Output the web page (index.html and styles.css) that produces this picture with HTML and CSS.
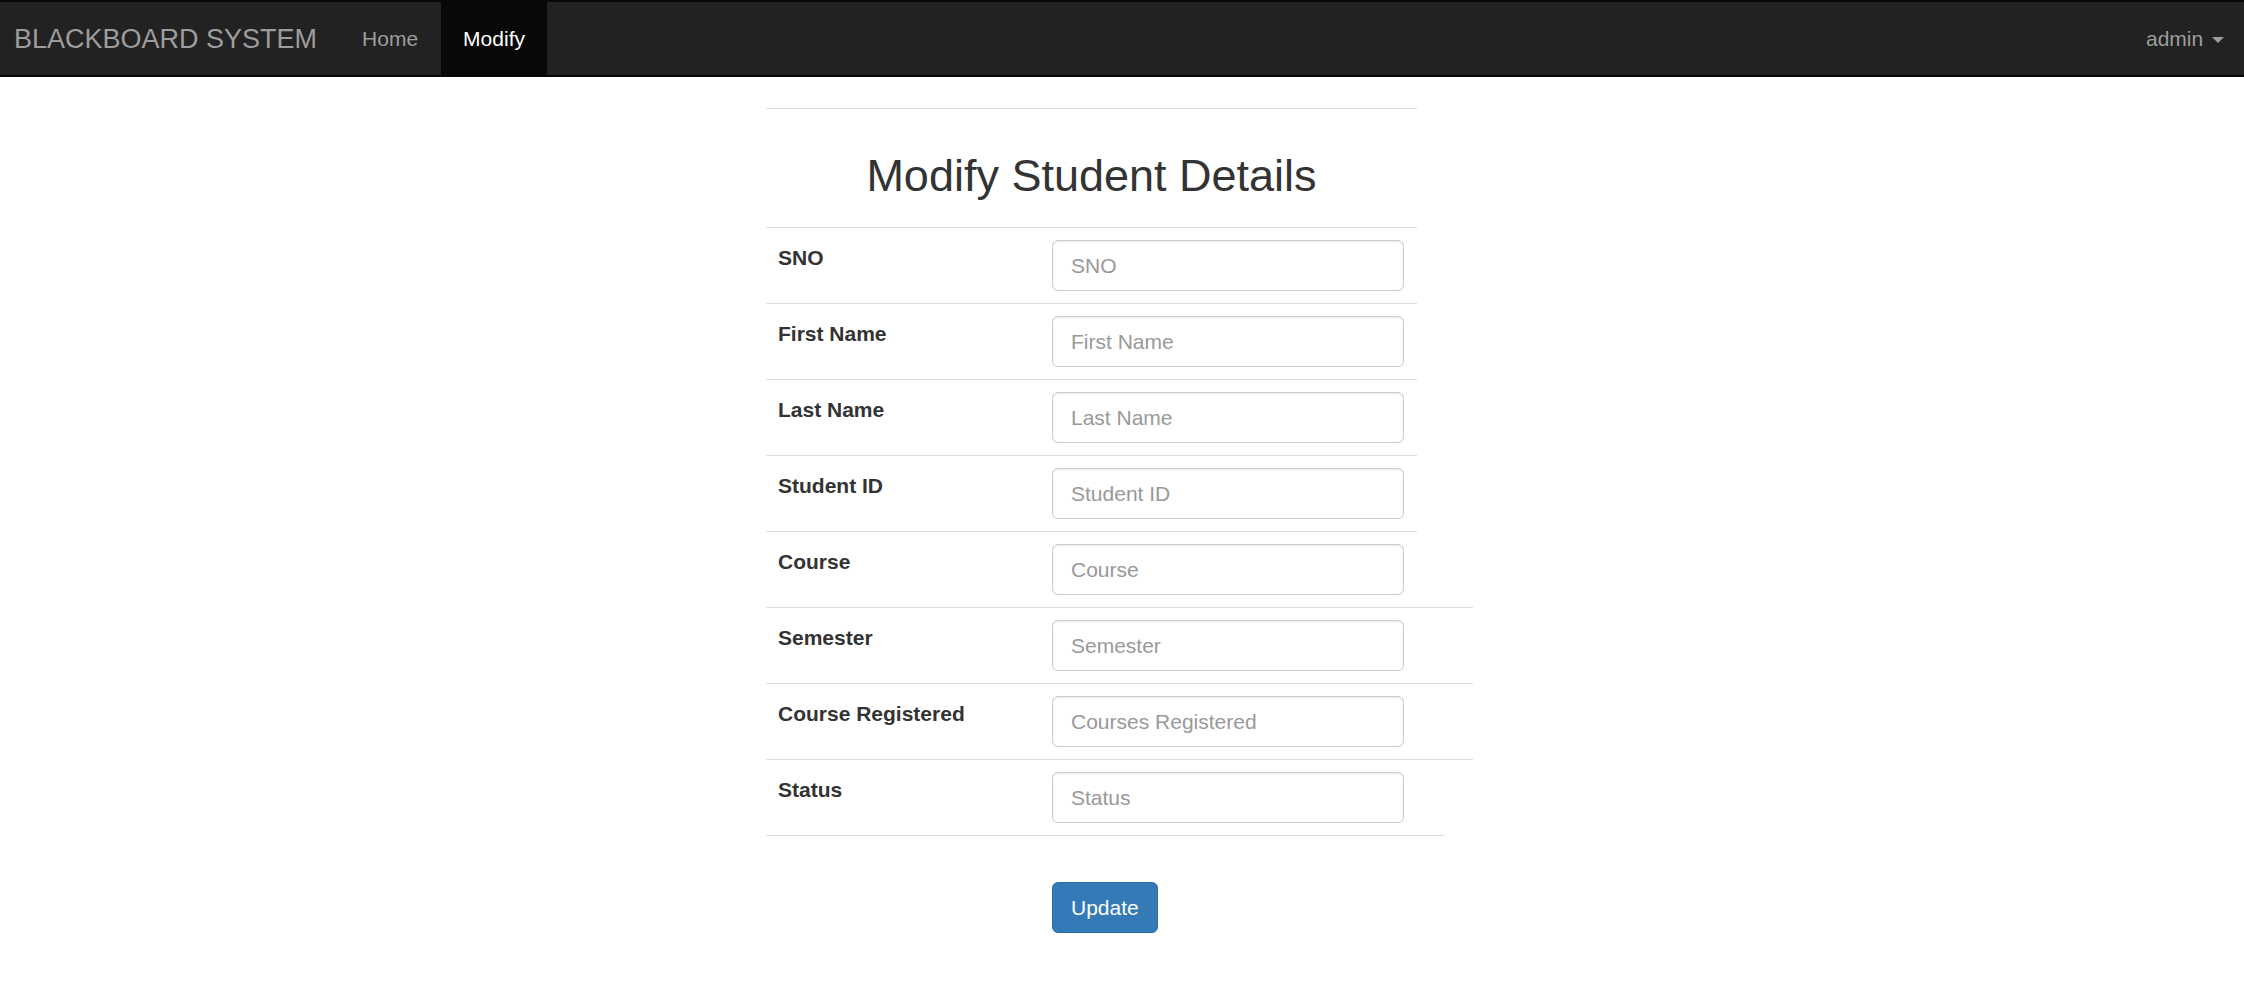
FILE: index.html
```html
<!DOCTYPE html>
<html lang="en">
<head>
<meta charset="utf-8">
<title>Modify Student Details</title>
<link rel="stylesheet" href="styles.css">
</head>
<body>
<nav class="navbar">
  <a class="brand" href="#">BLACKBOARD SYSTEM</a>
  <ul class="nav">
    <li><a class="nav-link" href="#">Home</a></li>
    <li><a class="nav-link active" href="#">Modify</a></li>
  </ul>
  <div class="nav-spacer"></div>
  <a class="nav-link user" href="#">admin <span class="caret"></span></a>
</nav>

<main class="page">
  <form class="student-form">
    <div class="title-row">
      <h2 class="title">Modify Student Details</h2>
    </div>
    <div class="field-row">
      <label class="field-label" for="sno">SNO</label>
      <div class="field-control"><input class="input" id="sno" type="text" placeholder="SNO"></div>
    </div>
    <div class="field-row">
      <label class="field-label" for="fname">First Name</label>
      <div class="field-control"><input class="input" id="fname" type="text" placeholder="First Name"></div>
    </div>
    <div class="field-row">
      <label class="field-label" for="lname">Last Name</label>
      <div class="field-control"><input class="input" id="lname" type="text" placeholder="Last Name"></div>
    </div>
    <div class="field-row">
      <label class="field-label" for="sid">Student ID</label>
      <div class="field-control"><input class="input" id="sid" type="text" placeholder="Student ID"></div>
    </div>
    <div class="field-row">
      <label class="field-label" for="course">Course</label>
      <div class="field-control"><input class="input" id="course" type="text" placeholder="Course"></div>
    </div>
    <div class="field-row field-row-wide">
      <label class="field-label" for="sem">Semester</label>
      <div class="field-control"><input class="input" id="sem" type="text" placeholder="Semester"></div>
    </div>
    <div class="field-row field-row-wide">
      <label class="field-label" for="creg">Course Registered</label>
      <div class="field-control"><input class="input" id="creg" type="text" placeholder="Courses Registered"></div>
    </div>
    <div class="field-row field-row-wide">
      <label class="field-label" for="status">Status</label>
      <div class="field-control"><input class="input" id="status" type="text" placeholder="Status"></div>
    </div>
    <div class="form-end"></div>
    <div class="actions">
      <button class="btn-primary" type="submit">Update</button>
    </div>
  </form>
</main>
</body>
</html>
```

FILE: styles.css
```css
* {
  box-sizing: border-box;
}

html, body {
  margin: 0;
  padding: 0;
  background: #fff;
}

body {
  font-family: "Liberation Sans", Arial, Helvetica, sans-serif;
  font-size: 21px;
  line-height: 30px;
  color: #333;
}

a {
  text-decoration: none;
}

/* Navbar */
.navbar {
  display: flex;
  align-items: stretch;
  height: 77px;
  background: #222;
  border-top: 2px solid #080808;
  border-bottom: 2px solid #080808;
}

.brand {
  display: block;
  padding: 21.5px 22.5px 21.5px 14px;
  font-size: 27px;
  line-height: 30px;
  color: #9d9d9d;
}

.nav {
  display: flex;
  margin: 0;
  padding: 0;
  list-style: none;
}

.nav li {
  display: block;
}

.nav-link {
  display: block;
  padding: 21.5px 22.5px;
  line-height: 30px;
  color: #9d9d9d;
}

.nav-link.active {
  background: #080808;
  color: #fff;
}

.nav-spacer {
  flex: 1;
}

.user {
  padding-right: 20px;
}

.caret {
  display: inline-block;
  width: 0;
  height: 0;
  margin-left: 3px;
  vertical-align: middle;
  border-top: 6px solid #9d9d9d;
  border-left: 6px solid transparent;
  border-right: 6px solid transparent;
}

/* Page */
.page {
  padding: 31px 0 0 766px;
}

.student-form {
  margin: 0;
}

.title-row {
  width: 651px;
  border-top: 1px solid #ddd;
  padding: 12px;
  text-align: center;
}

.title {
  margin: 29.5px 0 15px;
  font-size: 45px;
  font-weight: 400;
  line-height: 49.5px;
  color: #333;
}

.field-row {
  display: flex;
  width: 651px;
  padding: 12px 0;
  border-top: 1px solid #ddd;
}

.field-row-wide {
  width: 707px;
}

.field-label {
  flex: 0 0 274px;
  padding: 3px 12px 0;
  font-weight: 700;
  line-height: 30px;
  color: #333;
}

.field-control {
  padding: 0 12px;
}

.input {
  display: block;
  width: 352px;
  height: 51px;
  padding: 9px 18px;
  font-family: "Liberation Sans", Arial, Helvetica, sans-serif;
  font-size: 21px;
  line-height: 30px;
  color: #555;
  background: #fff;
  border: 1px solid #ccc;
  border-radius: 6px;
  box-shadow: inset 0 1.5px 1.5px rgba(0, 0, 0, 0.075);
  outline: none;
}

.input::placeholder {
  color: #999;
}

.form-end {
  width: 678px;
  border-top: 1px solid #ddd;
}

.actions {
  padding: 46px 0 0 286px;
}

.btn-primary {
  display: inline-block;
  height: 51px;
  padding: 9px 18px;
  font-family: "Liberation Sans", Arial, Helvetica, sans-serif;
  font-size: 21px;
  line-height: 30px;
  color: #fff;
  background: #337ab7;
  border: 1px solid #2e6da4;
  border-radius: 6px;
  cursor: pointer;
}
```
